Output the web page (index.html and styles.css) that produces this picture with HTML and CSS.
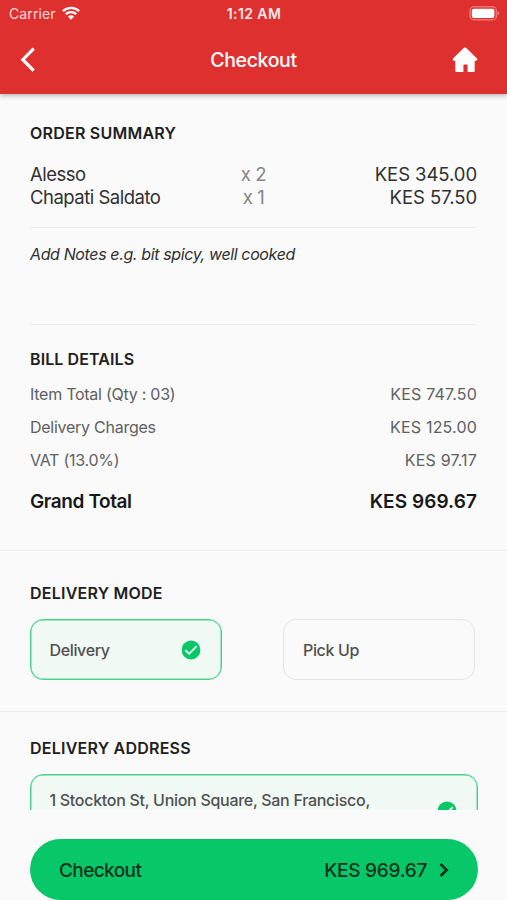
FILE: index.html
```html
<!DOCTYPE html>
<html lang="en">
<head>
<meta charset="utf-8">
<title>Checkout</title>
<link rel="stylesheet" href="styles.css">
</head>
<body>
<div class="screen">
  <header class="header">
    <div class="status">
      <div class="carrier"><span>Carrier</span>
        <svg class="wifi" width="18" height="14" viewBox="0 0 18 14"><g fill="none" stroke="#fff" stroke-width="2.3"><path d="M.9 5.100a11.600 11.600 0 0 1 16.200 0"/><path d="M3.800 8.200a7.500 7.500 0 0 1 10.400 0"/></g><path d="M9 13.700 5.900 10.600a4.500 4.500 0 0 1 6.200 0z" fill="#fff"/></svg>
      </div>
      <span class="time">1:12 AM</span>
      <svg class="battery" width="31" height="15" viewBox="0 0 31 15"><rect x="1" y=".8" width="26.400" height="12.900" rx="3.800" fill="none" stroke="#eb7473" stroke-width="1.500"/><rect x="2.800" y="2.700" width="22.600" height="9.200" rx="2" fill="#fff"/><path d="M28.500 5v4.600q1.800-.8 1.800-2.300T28.500 5z" fill="#eb7473"/></svg>
    </div>
    <div class="nav">
      <svg width="16" height="26" viewBox="0 0 16 26"><path d="M13.700 1.700 2.800 12.700l10.900 11" fill="none" stroke="#fff" stroke-width="3.200"/></svg>
      <h1 class="title">Checkout</h1>
      <svg width="26" height="26" viewBox="0 0 26 26"><path d="M12 .8Q13 0 14 .8L25 11.500Q26 13.500 24.200 13.800H22.700V23.800Q22.700 25 21.500 25H15.600V18.500Q15.600 17.500 14.600 17.500H12.400Q11.400 17.500 11.400 18.500V25H4.500Q3.300 25 3.300 23.800V13.800H1.800Q0 13.500 1 11.500Z" fill="#fff"/></svg>
    </div>
  </header>
  <main class="content">
    <section class="summary">
      <h2 class="heading">ORDER SUMMARY</h2>
      <div class="items">
        <span>Alesso</span><span class="qty">x 2</span><span class="price">KES 345.00</span>
        <span>Chapati Saldato</span><span class="qty">x 1</span><span class="price">KES 57.50</span>
      </div>
      <div class="notes"><span>Add Notes e.g. bit spicy, well cooked</span></div>
      <h2 class="heading bill">BILL DETAILS</h2>
      <div class="line"><span>Item Total (Qty : 03)</span><span class="amount">KES 747.50</span></div>
      <div class="line"><span>Delivery Charges</span><span class="amount">KES 125.00</span></div>
      <div class="line"><span>VAT (13.0%)</span><span class="amount">KES 97.17</span></div>
      <div class="line grand"><span>Grand Total</span><span class="amount">KES 969.67</span></div>
    </section>
    <section class="mode">
      <h2 class="heading">DELIVERY MODE</h2>
      <div class="options">
        <div class="option selected"><span>Delivery</span>
          <svg class="check" width="20" height="20" viewBox="0 0 20 20"><circle cx="10" cy="10" r="9.400" fill="#08c769"/><path d="m4.300 10.100 3.800 3.700 7.600-7.600" fill="none" stroke="#f1faf5" stroke-width="1.800"/></svg>
        </div>
        <div class="option"><span>Pick Up</span></div>
      </div>
    </section>
    <section class="address">
      <h2 class="heading">DELIVERY ADDRESS</h2>
      <div class="option selected place"><span>1 Stockton St, Union Square, San Francisco,</span>
        <svg class="check" width="20" height="20" viewBox="0 0 20 20"><circle cx="10" cy="10" r="9.400" fill="#08c769"/><path d="m4.300 10.100 3.800 3.700 7.600-7.600" fill="none" stroke="#f1faf5" stroke-width="1.800"/></svg>
      </div>
    </section>
  </main>
  <footer class="footer">
    <div class="button"><span>Checkout</span><span class="total">KES 969.67</span>
      <svg width="10" height="16" viewBox="0 0 10 16"><path d="m1.500 2 6.200 6-6.200 6" fill="none" stroke="#06331b" stroke-width="2.600"/></svg>
    </div>
  </footer>
</div>
</body>
</html>
```
FILE: styles.css
```css
* { box-sizing: border-box; }
body { margin: 0; background: #fafafa; font-family: Inter, "Liberation Sans", sans-serif; color: #303030; }
.screen { width: 507px; height: 900px; display: flex; flex-direction: column; overflow: hidden; }
svg { display: block; flex: none; }
h1, h2 { margin: 0; }
span { white-space: nowrap; }

.header { height: 94px; flex: none; background: #df3030; color: #fff; box-shadow: 0 1px 5px rgba(0, 0, 0, .35); z-index: 1; }
.status { height: 27px; padding: 0 7px 0 9px; display: grid; grid-template-columns: 1fr auto 1fr; align-items: center; font-size: 14px; }
.carrier { display: flex; align-items: center; gap: 6px; color: #fbdcdc; }
.carrier span { letter-spacing: .1px; }
.carrier svg { margin-top: -1px; }
.time { font-weight: 600; font-size: 14px; letter-spacing: .4px; color: #fdeaea; margin-right: 1px; }
.battery { justify-self: end; margin-top: -1px; }
.nav { height: 66px; padding: 0 29px 0 20px; display: flex; align-items: center; justify-content: space-between; }
.title { font-size: 19.5px; font-weight: 500; letter-spacing: -.35px; margin-left: 19px; }

.content { height: 716px; flex: none; overflow: hidden; }
.summary { height: 457px; padding: 29px 30px 0; border-bottom: 1px solid #eeeeee; }
.heading { font-size: 16px; line-height: 20px; font-weight: 600; letter-spacing: .23px; color: #202020; }
.items { display: grid; grid-template-columns: 1fr 80px 1fr; margin-top: 20px; padding-bottom: 18px; line-height: 23px; font-size: 18.5px; letter-spacing: -.5px; border-bottom: 1px solid #eeeeee; }
.qty { text-align: center; letter-spacing: -.4px; color: #858585; }
.price { text-align: right; letter-spacing: -.07px; }
.notes { height: 97px; padding-top: 16px; border-bottom: 1px solid #eeeeee; font-size: 16px; line-height: 20px; font-style: italic; letter-spacing: -.37px; }
.bill { margin-top: 24px; margin-bottom: 9px; letter-spacing: .1px; }
.line { display: flex; justify-content: space-between; height: 33px; line-height: 33px; font-size: 16px; letter-spacing: -.26px; color: #606060; }
.amount { letter-spacing: .18px; }
.grand { margin-top: 8px; font-size: 19px; font-weight: 600; letter-spacing: -.4px; color: #181818; }
.grand .amount { letter-spacing: .08px; }

.mode { height: 161px; padding: 32px 32px 0 30px; border-bottom: 1px solid #eeeeee; }
.options { display: flex; justify-content: space-between; margin-top: 16px; }
.option { width: 192px; height: 61px; border: 1px solid #e5e5e5; border-radius: 13px; padding: 0 20px 0 19px; display: flex; align-items: center; justify-content: space-between; font-size: 16px; font-weight: 450; color: #505050; letter-spacing: -.35px; }
.selected { border-color: #4bd28e; background: #f0f9f4; box-shadow: inset 0 0 0 .5px #4bd28e; }
.selected span { margin-left: -.5px; }
.address { padding: 26px 29px 0 30px; }
.place { width: 448px; height: 90px; margin-top: 16px; align-items: flex-start; padding-top: 15px; line-height: 20px; letter-spacing: -.29px; }
.place .check { margin-top: 11px; }

.footer { flex: 1; padding: 29px 29px 0 30px; }
.button { height: 61px; border-radius: 31px; background: #08c769; display: flex; align-items: center; padding: 1px 29px 0; font-size: 19px; font-weight: 450; letter-spacing: -.6px; color: #06331b; }
.total { margin-left: auto; margin-right: 12px; letter-spacing: -.25px; }
```
